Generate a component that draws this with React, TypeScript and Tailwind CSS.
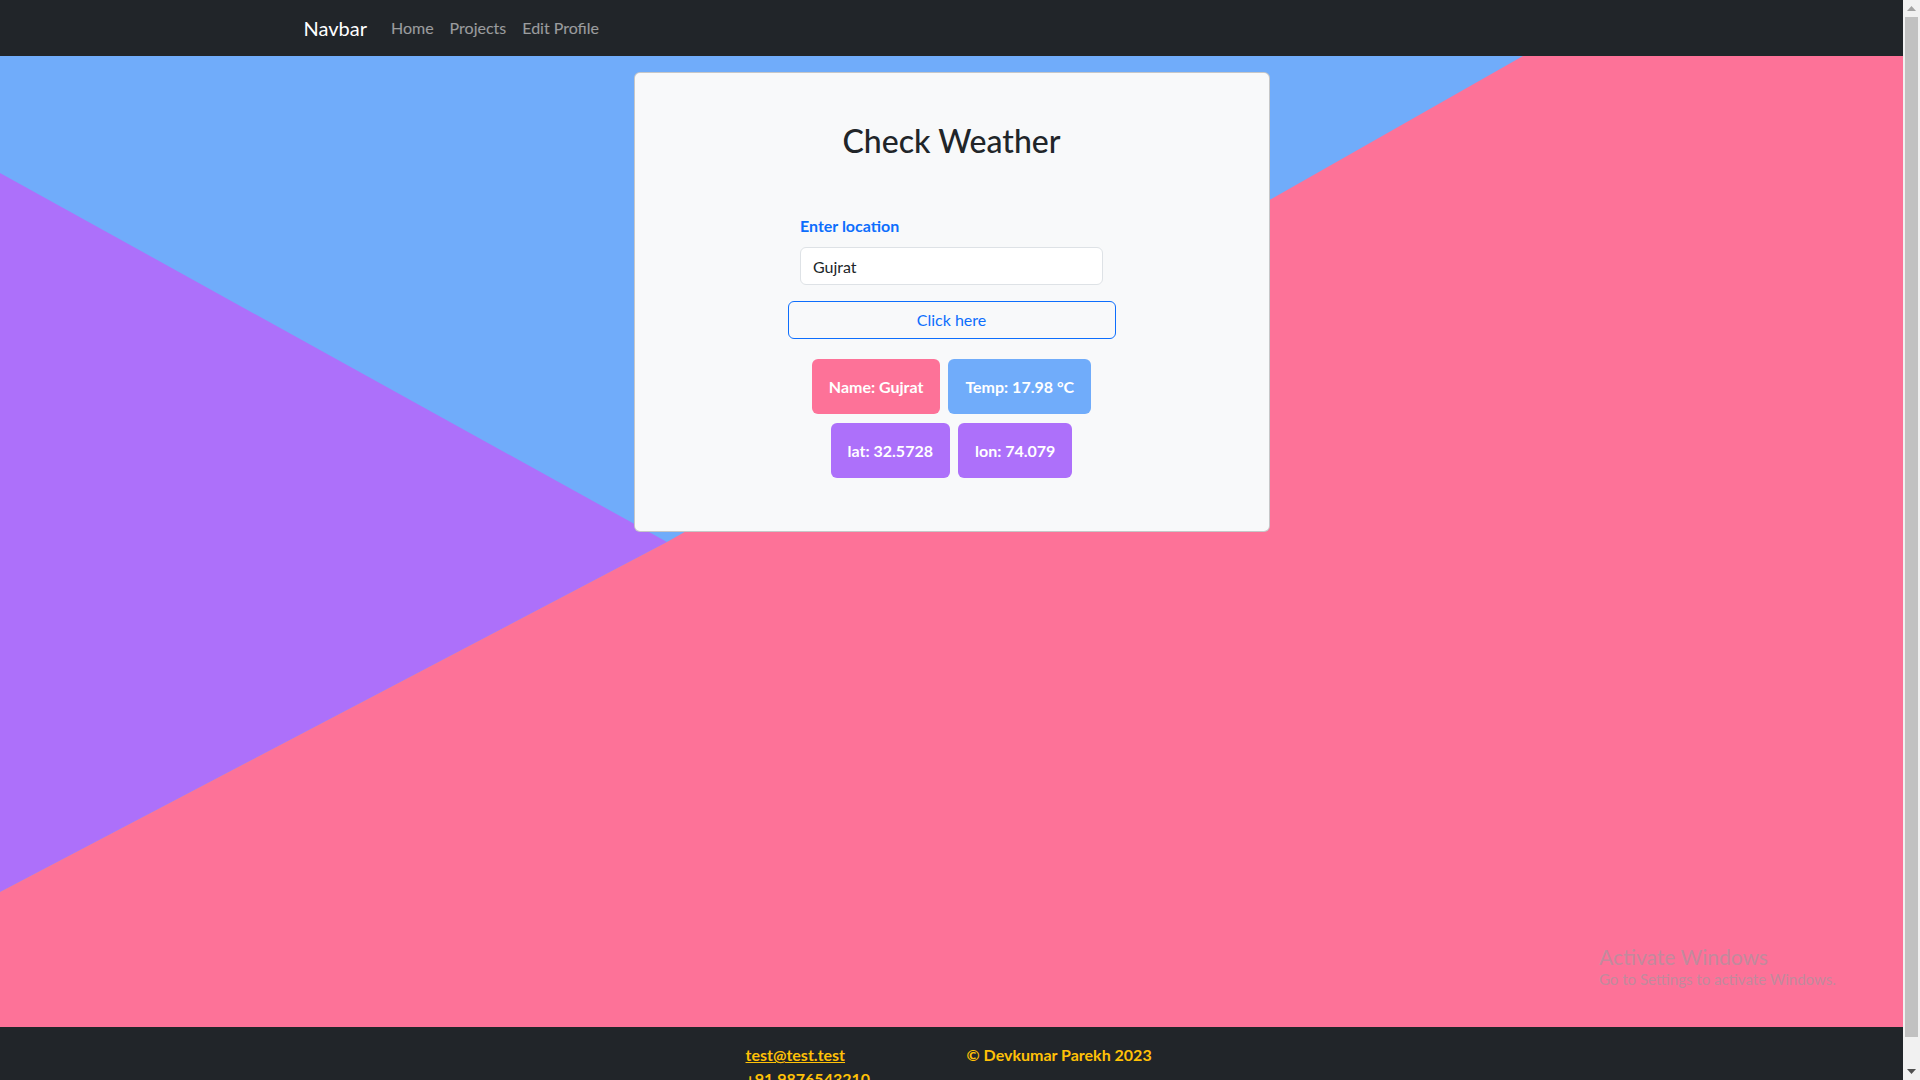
import React from 'react';

type Stat = { label: string; bg: string };

const topRow: Stat[] = [
  { label: 'Name: Gujrat', bg: 'bg-[#fd7298]' },
  { label: 'Temp: 17.98 °C', bg: 'bg-[#70acfa]' },
];

const bottomRow: Stat[] = [
  { label: 'lat: 32.5728', bg: 'bg-[#ad70fa]' },
  { label: 'lon: 74.079', bg: 'bg-[#ad70fa]' },
];

function StatBox({ label, bg }: Stat) {
  return (
    <div className={`${bg} rounded-md px-[17px] h-[55px] flex items-center text-base font-bold text-white`}>
      {label}
    </div>
  );
}

// Layered polygons behind the card (blue base, purple wedge, pink sweep)
function Backdrop() {
  return (
    <svg
      className="absolute inset-0 w-full h-full"
      viewBox="0 0 1903 971"
      preserveAspectRatio="none"
    >
      <rect width="1903" height="971" fill="#70acfa" />
      <polygon points="0,117 667,486 0,836" fill="#ad70fa" />
      <polygon points="1523,0 1903,0 1903,971 0,971 0,836 667,486" fill="#fd7298" />
    </svg>
  );
}

function Scrollbar() {
  return (
    <div className="w-[17px] h-full bg-[#f1f1f1] flex flex-col items-center">
      <div className="h-[17px] flex items-center justify-center">
        <svg width="9" height="5" viewBox="0 0 9 5">
          <polygon points="4.5,0 9,5 0,5" fill="#a3a3a3" />
        </svg>
      </div>
      <div className="flex-1 w-[13px] bg-[#c1c1c1] mb-[26px]" />
      <div className="h-[17px] flex items-center justify-center">
        <svg width="9" height="5" viewBox="0 0 9 5">
          <polygon points="0,0 9,0 4.5,5" fill="#505050" />
        </svg>
      </div>
    </div>
  );
}

export default function App() {
  return (
    <div className="h-[1080px] w-full flex overflow-hidden font-[Lato,sans-serif] text-[#212529]">
      <div className="flex-1 flex flex-col min-w-0">
        {/* Navbar */}
        <nav className="h-14 shrink-0 bg-[#212529]">
          <div className="w-[1320px] mx-auto px-3 h-full flex items-center">
            <span className="text-xl text-white mr-4">Navbar</span>
            <a className="px-2 text-base text-white/55">Home</a>
            <a className="px-2 text-base text-white/55">Projects</a>
            <a className="px-2 text-base text-white/55">Edit Profile</a>
          </div>
        </nav>

        {/* Main */}
        <main className="relative h-[971px] shrink-0 pt-4">
          <Backdrop />

          <div className="relative mx-auto w-[636px] bg-[#f8f9fa] border border-black/20 rounded-md pt-[49px] pb-[53px] flex flex-col items-center">
            <h2 className="text-[32px] leading-[38px] font-medium">Check Weather</h2>

            <div className="w-[303px] mt-[54px]">
              <label className="block text-base leading-6 font-bold text-[#0d6efd] mb-[9px]">
                Enter location
              </label>
              <input
                readOnly
                value="Gujrat"
                className="w-full h-[38px] px-3 bg-white border border-[#dee2e6] rounded-md text-base text-[#212529] outline-none"
              />
            </div>

            <button className="mt-4 w-[328px] h-[38px] border border-[#0d6efd] rounded-md text-base text-[#0d6efd]">
              Click here
            </button>

            <div className="mt-5 flex flex-col items-center gap-[9px]">
              <div className="flex gap-2">
                {topRow.map((s) => (
                  <StatBox key={s.label} {...s} />
                ))}
              </div>
              <div className="flex gap-2">
                {bottomRow.map((s) => (
                  <StatBox key={s.label} {...s} />
                ))}
              </div>
            </div>
          </div>

          {/* OS watermark */}
          <div className="absolute left-[1599px] top-[888px] text-[#c28a9d] leading-tight">
            <div className="text-[21px]">Activate Windows</div>
            <div className="text-[15px]">Go to Settings to activate Windows.</div>
          </div>
        </main>

        {/* Footer */}
        <footer className="bg-[#212529] pt-4 pb-4 shrink-0">
          <div className="flex justify-center text-base leading-6 font-bold text-[#ffc107]">
            <div className="w-[221px] flex flex-col">
              <a className="underline">test@test.test</a>
              <span>+91 9876543210</span>
            </div>
            <div className="w-[191px]">© Devkumar Parekh 2023</div>
          </div>
        </footer>
      </div>
      <Scrollbar />
    </div>
  );
}
